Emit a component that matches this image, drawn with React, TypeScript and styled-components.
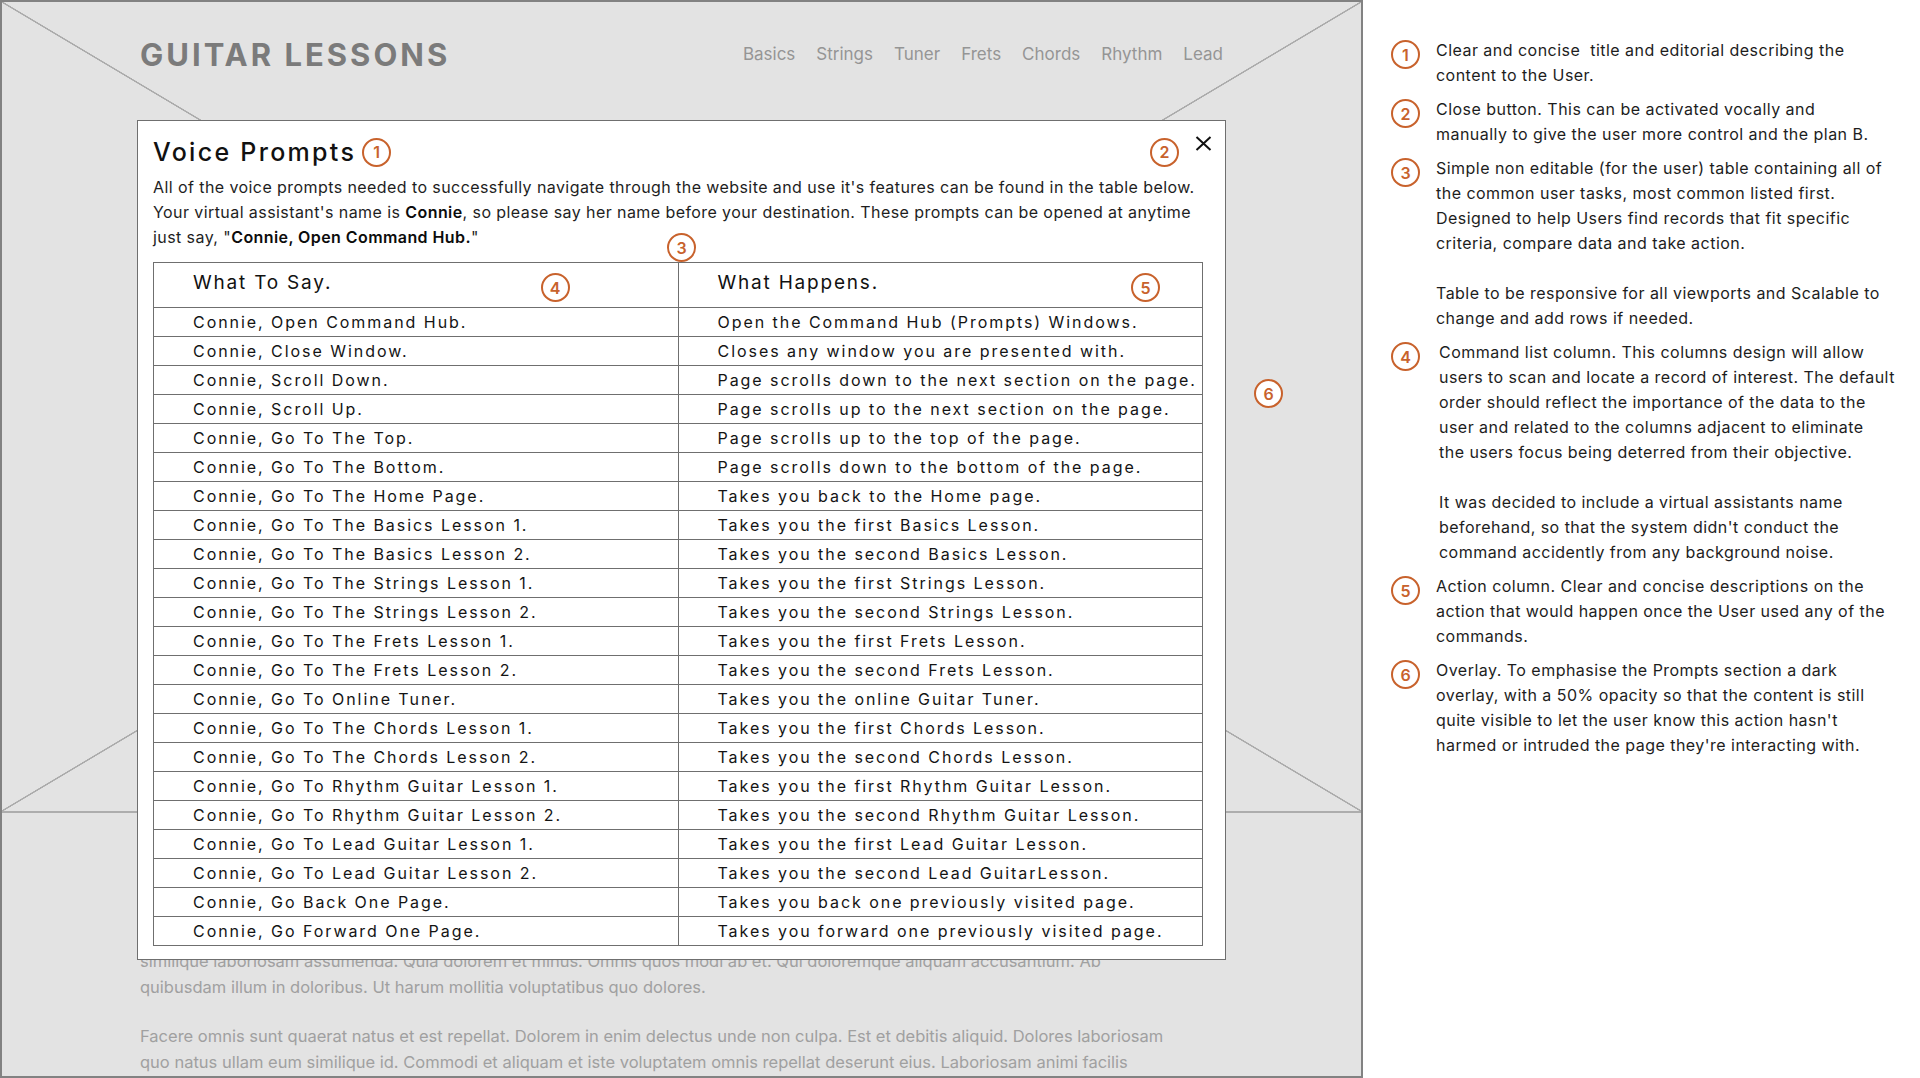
import React from 'react';
import styled, { createGlobalStyle } from 'styled-components';

const GlobalStyle = createGlobalStyle`
  html, body {
    margin: 0;
    padding: 0;
    background: #ffffff;
  }
  body {
    font-family: Inter, "Open Sans", sans-serif;
    color: #1c1c1c;
  }
`;

const Page = styled.div`
  display: flex;
  width: 1920px;
  height: 1078px;
  overflow: hidden;
`;

const Stage = styled.div`
  position: relative;
  flex: 0 0 1363px;
  height: 1078px;
  box-sizing: border-box;
  border: 2px solid #828282;
  background: #e3e3e3;
  overflow: hidden;
`;

const Hero = styled.div`
  height: 809px;
  border-bottom: 2px solid #adadad;
  background:
    linear-gradient(to top right, transparent calc(50% - 1px), #ababab calc(50% - 0.5px), #ababab calc(50% + 0.5px), transparent calc(50% + 1px)),
    linear-gradient(to bottom right, transparent calc(50% - 1px), #ababab calc(50% - 0.5px), #ababab calc(50% + 0.5px), transparent calc(50% + 1px));
`;

const Header = styled.header`
  display: flex;
  align-items: center;
  justify-content: space-between;
  height: 104px;
  padding: 0 138px;
`;

const Brand = styled.h1`
  margin: 0;
  font-size: 31px;
  font-weight: 700;
  letter-spacing: 3px;
  color: #7b7b7b;
`;

const Nav = styled.nav`
  display: flex;
  gap: 21px;
`;

const NavLink = styled.a`
  font-size: 17px;
  color: #959595;
  text-decoration: none;
`;

const Body = styled.div`
  padding: 135px 0 0 138px;
`;

const Para = styled.p<{ $gap?: number }>`
  margin: ${(p) => p.$gap ?? 0}px 0 0;
  font-size: 16.5px;
  line-height: 26px;
  color: #a0a0a0;
  white-space: nowrap;
`;

const Line = styled.span`
  display: block;
`;

const Modal = styled.div`
  position: absolute;
  left: 135px;
  top: 118px;
  width: 1089px;
  height: 840px;
  box-sizing: border-box;
  padding: 16px 13px 0 15px;
  background: #ffffff;
  border: 1.5px solid #6f6f6f;
`;

const TitleRow = styled.div`
  display: flex;
  align-items: center;
  justify-content: space-between;
  height: 30px;
`;

const TitleGroup = styled.div`
  display: flex;
  align-items: center;
  gap: 6px;
`;

const Title = styled.h2`
  margin: 0;
  font-size: 25px;
  font-weight: 500;
  letter-spacing: 2.3px;
  color: #111;
`;

const CloseGroup = styled.div`
  display: flex;
  align-items: center;
  gap: 16px;
`;

const CloseButton = styled.button`
  align-self: flex-start;
  margin-top: -2px;
  padding: 0;
  border: 0;
  background: none;
  line-height: 0;
  cursor: pointer;
`;

const Marker = styled.span<{ $fill?: boolean }>`
  display: inline-flex;
  align-items: center;
  justify-content: center;
  flex: 0 0 auto;
  width: 29px;
  height: 29px;
  box-sizing: border-box;
  border: 2px solid #c8622c;
  border-radius: 50%;
  background: ${(p) => (p.$fill ? '#ffffff' : 'transparent')};
  color: #c8622c;
  font-size: 16px;
  font-weight: 600;
  line-height: 1;
`;

const FloatMarker = styled(Marker)<{ $left: number; $top: number }>`
  position: absolute;
  left: ${(p) => p.$left}px;
  top: ${(p) => p.$top}px;
`;

const Intro = styled.p`
  margin: 8px 0 0;
  font-size: 16px;
  line-height: 25px;
  letter-spacing: 0.42px;
  color: #1e1e1e;
  white-space: nowrap;

  b {
    font-weight: 600;
    color: #0c0c0c;
  }
`;

const TableWrap = styled.div`
  position: relative;
  margin-top: 12px;
  width: 1050px;
`;

const Table = styled.table`
  width: 100%;
  border-collapse: collapse;
  table-layout: fixed;
`;

const HeadCell = styled.th<{ $padRight: number }>`
  height: 44px;
  padding: 0 ${(p) => p.$padRight}px 0 39px;
  border: 1.5px solid #6f6f6f;
  text-align: left;
  font-weight: 400;
`;

const HeadInner = styled.div`
  display: flex;
  align-items: center;
  justify-content: space-between;
`;

const HeadText = styled.span`
  font-size: 19px;
  letter-spacing: 1.8px;
  color: #111;
  margin-top: -5px;
`;

const HeadMarker = styled(Marker)`
  margin-top: 5px;
`;

const Cell = styled.td`
  height: 28px;
  padding: 0 0 0 39px;
  border: 1.5px solid #6f6f6f;
  font-size: 16px;
  line-height: 20px;
  letter-spacing: 1.95px;
  color: #141414;
  white-space: nowrap;
`;

const Notes = styled.aside`
  flex: 1;
  padding: 38px 0 0 28px;
  background: #ffffff;
  display: flex;
  flex-direction: column;
  gap: 9px;
`;

const Note = styled.div<{ $indent?: number }>`
  display: flex;
  align-items: flex-start;
  gap: ${(p) => 16 + (p.$indent ?? 0)}px;
`;

const NoteMarker = styled(Marker)`
  margin-top: 2px;
`;

const NoteText = styled.div`
  font-size: 16px;
  line-height: 25px;
  letter-spacing: 0.47px;
  color: #1d1d1d;
  white-space: pre;
`;

const Blank = styled.span`
  display: block;
  height: 25px;
`;

const navItems = ['Basics', 'Strings', 'Tuner', 'Frets', 'Chords', 'Rhythm', 'Lead'];

const prompts: [string, string][] = [
  ['Connie, Open Command Hub.', 'Open the Command Hub (Prompts) Windows.'],
  ['Connie, Close Window.', 'Closes any window you are presented with.'],
  ['Connie, Scroll Down.', 'Page scrolls down to the next section on the page.'],
  ['Connie, Scroll Up.', 'Page scrolls up to the next section on the page.'],
  ['Connie, Go To The Top.', 'Page scrolls up to the top of the page.'],
  ['Connie, Go To The Bottom.', 'Page scrolls down to the bottom of the page.'],
  ['Connie, Go To The Home Page.', 'Takes you back to the Home page.'],
  ['Connie, Go To The Basics Lesson 1.', 'Takes you the first Basics Lesson.'],
  ['Connie, Go To The Basics Lesson 2.', 'Takes you the second Basics Lesson.'],
  ['Connie, Go To The Strings Lesson 1.', 'Takes you the first Strings Lesson.'],
  ['Connie, Go To The Strings Lesson 2.', 'Takes you the second Strings Lesson.'],
  ['Connie, Go To The Frets Lesson 1.', 'Takes you the first Frets Lesson.'],
  ['Connie, Go To The Frets Lesson 2.', 'Takes you the second Frets Lesson.'],
  ['Connie, Go To Online Tuner.', 'Takes you the online Guitar Tuner.'],
  ['Connie, Go To The Chords Lesson 1.', 'Takes you the first Chords Lesson.'],
  ['Connie, Go To The Chords Lesson 2.', 'Takes you the second Chords Lesson.'],
  ['Connie, Go To Rhythm Guitar Lesson 1.', 'Takes you the first Rhythm Guitar Lesson.'],
  ['Connie, Go To Rhythm Guitar Lesson 2.', 'Takes you the second Rhythm Guitar Lesson.'],
  ['Connie, Go To Lead Guitar Lesson 1.', 'Takes you the first Lead Guitar Lesson.'],
  ['Connie, Go To Lead Guitar Lesson 2.', 'Takes you the second Lead GuitarLesson.'],
  ['Connie, Go Back One Page.', 'Takes you back one previously visited page.'],
  ['Connie, Go Forward One Page.', 'Takes you forward one previously visited page.'],
];

const notes: { n: number; indent?: number; lines: string[] }[] = [
  {
    n: 1,
    lines: ['Clear and concise  title and editorial describing the', 'content to the User.'],
  },
  {
    n: 2,
    lines: [
      'Close button. This can be activated vocally and',
      'manually to give the user more control and the plan B.',
    ],
  },
  {
    n: 3,
    lines: [
      'Simple non editable (for the user) table containing all of',
      'the common user tasks, most common listed first.',
      'Designed to help Users find records that fit specific',
      'criteria, compare data and take action.',
      '',
      'Table to be responsive for all viewports and Scalable to',
      'change and add rows if needed.',
    ],
  },
  {
    n: 4,
    indent: 3,
    lines: [
      'Command list column. This columns design will allow',
      'users to scan and locate a record of interest. The default',
      'order should reflect the importance of the data to the',
      'user and related to the columns adjacent to eliminate',
      'the users focus being deterred from their objective.',
      '',
      'It was decided to include a virtual assistants name',
      "beforehand, so that the system didn't conduct the",
      'command accidently from any background noise.',
    ],
  },
  {
    n: 5,
    lines: [
      'Action column. Clear and concise descriptions on the',
      'action that would happen once the User used any of the',
      'commands.',
    ],
  },
  {
    n: 6,
    lines: [
      'Overlay. To emphasise the Prompts section a dark',
      'overlay, with a 50% opacity so that the content is still',
      "quite visible to let the user know this action hasn't",
      "harmed or intruded the page they're interacting with.",
    ],
  },
];

// only the tail of the first paragraph peeks out from under the modal
const filler1 = [
  'similique laboriosam assumenda. Quia dolorem et minus. Omnis quos modi ab et. Qui doloremque aliquam accusantium. Ab',
  'quibusdam illum in doloribus. Ut harum mollitia voluptatibus quo dolores.',
];

const filler2 = [
  'Facere omnis sunt quaerat natus et est repellat. Dolorem in enim delectus unde non culpa. Est et debitis aliquid. Dolores laboriosam',
  'quo natus ullam eum similique id. Commodi et aliquam et iste voluptatem omnis repellat deserunt eius. Laboriosam animi facilis',
];

const CloseIcon = () => (
  <svg width="17" height="15" viewBox="0 0 17 15">
    <path d="M1.5 1 L15.5 14 M15.5 1 L1.5 14" stroke="#111" strokeWidth="2" fill="none" />
  </svg>
);

const App: React.FC = () => {
  return (
    <>
      <GlobalStyle />
      <Page>
        <Stage>
          <Hero>
            <Header>
              <Brand>GUITAR LESSONS</Brand>
              <Nav>
                {navItems.map((item) => (
                  <NavLink key={item}>{item}</NavLink>
                ))}
              </Nav>
            </Header>
          </Hero>
          <Body>
            <Para>
              {filler1.map((l) => (
                <Line key={l}>{l}</Line>
              ))}
            </Para>
            <Para $gap={23}>
              {filler2.map((l) => (
                <Line key={l}>{l}</Line>
              ))}
            </Para>
          </Body>

          <Modal>
            <TitleRow>
              <TitleGroup>
                <Title>Voice Prompts</Title>
                <Marker>1</Marker>
              </TitleGroup>
              <CloseGroup>
                <Marker>2</Marker>
                <CloseButton aria-label="Close">
                  <CloseIcon />
                </CloseButton>
              </CloseGroup>
            </TitleRow>
            <Intro>
              All of the voice prompts needed to successfully navigate through the website and use it's features can be found in the table below.
              <br />
              Your virtual assistant's name is <b>Connie</b>, so please say her name before your destination. These prompts can be opened at anytime
              <br />
              just say, "<b>Connie, Open Command Hub.</b>"
            </Intro>
            <TableWrap>
              <FloatMarker $left={514} $top={-29} $fill>
                3
              </FloatMarker>
              <Table>
                <thead>
                  <tr>
                    <HeadCell $padRight={108}>
                      <HeadInner>
                        <HeadText>What To Say.</HeadText>
                        <HeadMarker>4</HeadMarker>
                      </HeadInner>
                    </HeadCell>
                    <HeadCell $padRight={42}>
                      <HeadInner>
                        <HeadText>What Happens.</HeadText>
                        <HeadMarker>5</HeadMarker>
                      </HeadInner>
                    </HeadCell>
                  </tr>
                </thead>
                <tbody>
                  {prompts.map(([say, happens]) => (
                    <tr key={say}>
                      <Cell>{say}</Cell>
                      <Cell>{happens}</Cell>
                    </tr>
                  ))}
                </tbody>
              </Table>
            </TableWrap>
          </Modal>

          <FloatMarker $left={1252} $top={377} $fill>
            6
          </FloatMarker>
        </Stage>

        <Notes>
          {notes.map((note) => (
            <Note key={note.n} $indent={note.indent}>
              <NoteMarker>{note.n}</NoteMarker>
              <NoteText>
                {note.lines.map((l, i) =>
                  l ? <Line key={i}>{l}</Line> : <Blank key={i} />
                )}
              </NoteText>
            </Note>
          ))}
        </Notes>
      </Page>
    </>
  );
};

export default App;
